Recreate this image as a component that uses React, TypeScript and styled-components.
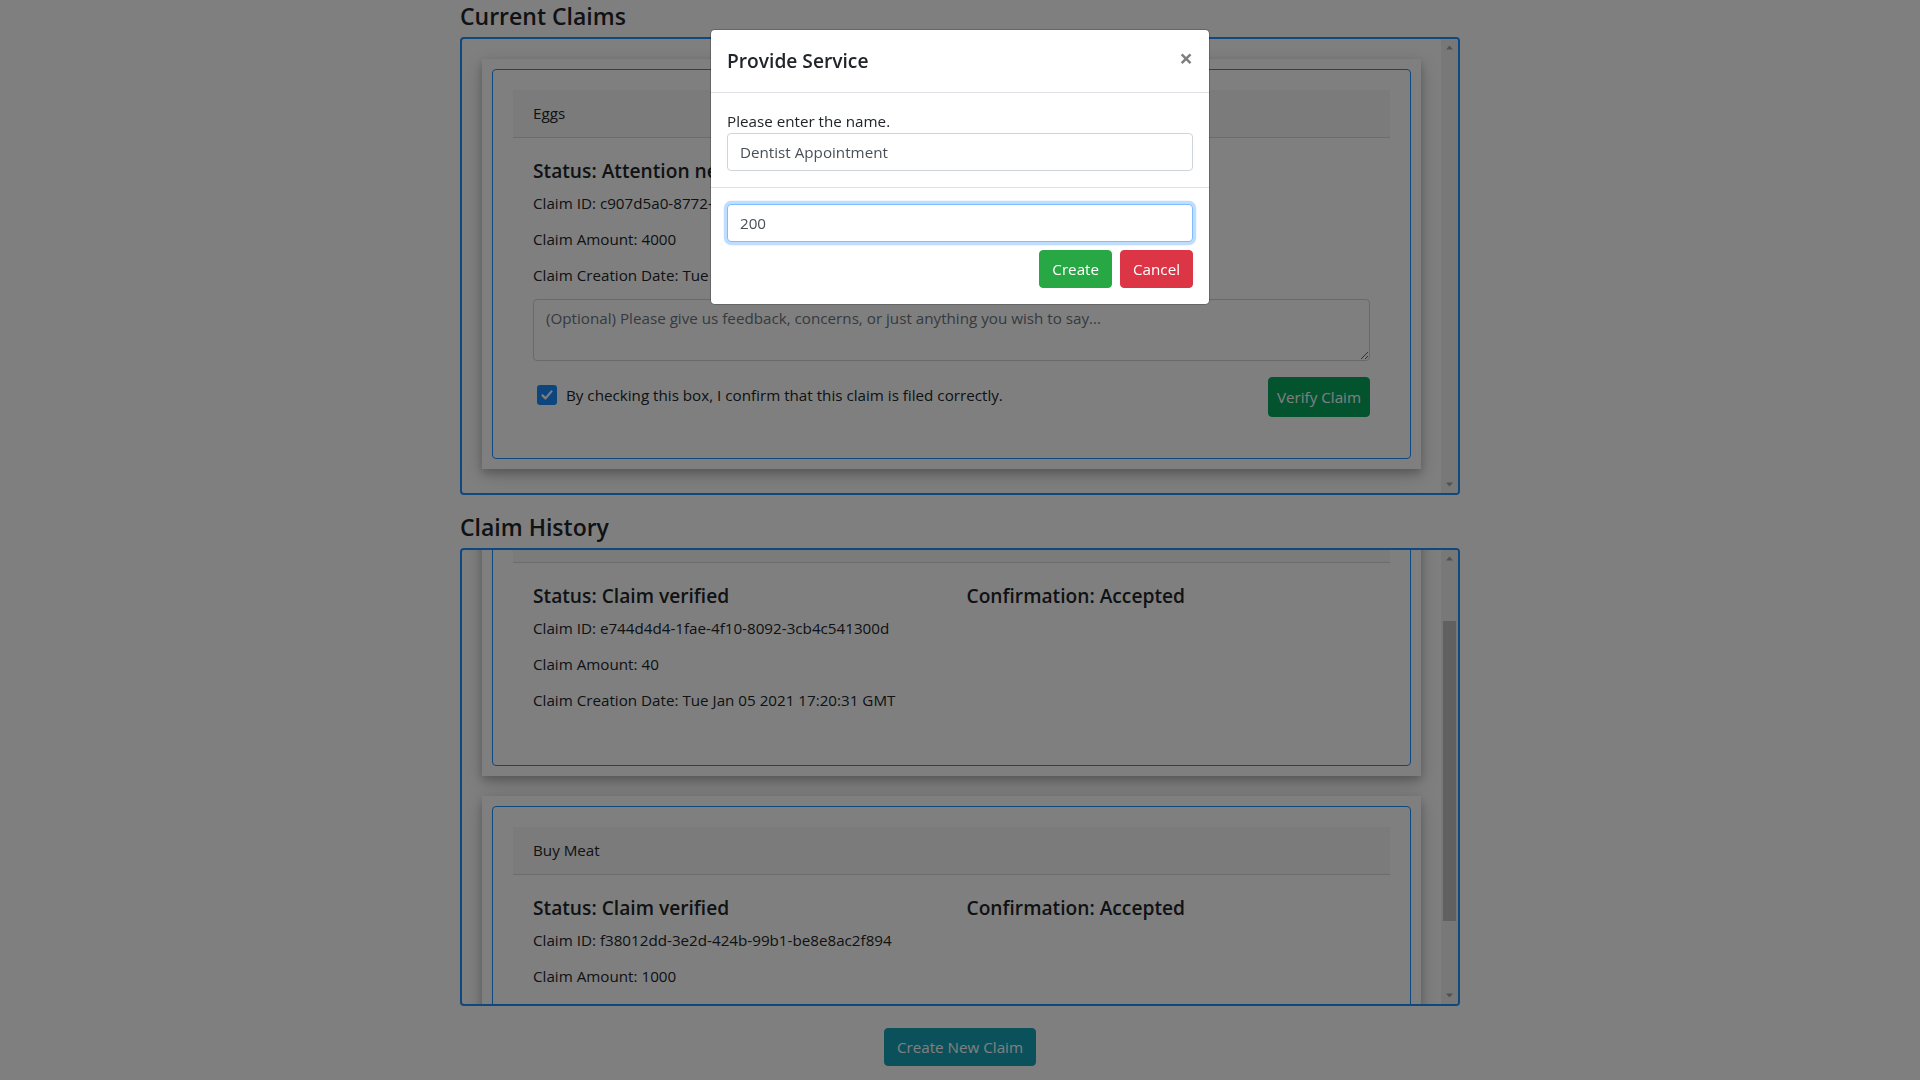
import React, { useLayoutEffect, useRef } from 'react';
import styled, { createGlobalStyle, css } from 'styled-components';

const GlobalStyle = createGlobalStyle`
  *, *::before, *::after {
    box-sizing: border-box;
  }
  html, body {
    margin: 0;
    padding: 0;
    background: #fff;
    overflow: hidden;
  }
  body {
    font-family: "Open Sans", "Noto Sans", sans-serif;
    font-size: 15.2px;
    line-height: 24px;
    color: #212529;
  }
`;

type Claim = {
  title: string;
  status: string;
  confirmation: string;
  id: string;
  amount: number;
  date: string;
};

const currentClaims: Claim[] = [
  {
    title: 'Eggs',
    status: 'Attention needed',
    confirmation: 'Pending',
    id: 'c907d5a0-8772-4c1e-9b3a-5f2d7e81a604',
    amount: 4000,
    date: 'Tue Jan 05 2021 17:24:12 GMT',
  },
];

const claimHistory: Claim[] = [
  {
    title: 'Buy Milk',
    status: 'Claim verified',
    confirmation: 'Accepted',
    id: 'e744d4d4-1fae-4f10-8092-3cb4c541300d',
    amount: 40,
    date: 'Tue Jan 05 2021 17:20:31 GMT',
  },
  {
    title: 'Buy Meat',
    status: 'Claim verified',
    confirmation: 'Accepted',
    id: 'f38012dd-3e2d-424b-99b1-be8e8ac2f894',
    amount: 1000,
    date: 'Tue Jan 05 2021 17:22:08 GMT',
  },
];

const ScrollBox = ({
  children,
  scrollTop = 0,
  thumb,
}: {
  children: React.ReactNode;
  scrollTop?: number;
  thumb?: { top: number; size: number };
}) => {
  const ref = useRef<HTMLDivElement>(null);

  useLayoutEffect(() => {
    if (ref.current) ref.current.scrollTop = scrollTop;
  }, [scrollTop]);

  return (
    <ListFrame>
      <ListViewport ref={ref}>{children}</ListViewport>
      <Rail>
        <RailButton>
          <svg width="17" height="17" viewBox="0 0 17 17">
            <polygon points="5,10.5 12,10.5 8.5,6.5" fill="#a3a3a3" />
          </svg>
        </RailButton>
        <RailTrack>
          {thumb && <RailThumb style={{ marginTop: thumb.top, height: thumb.size }} />}
        </RailTrack>
        <RailButton>
          <svg width="17" height="17" viewBox="0 0 17 17">
            <polygon points="5,6.5 12,6.5 8.5,10.5" fill="#a3a3a3" />
          </svg>
        </RailButton>
      </Rail>
    </ListFrame>
  );
};

const ClaimDetails = ({ claim }: { claim: Claim }) => (
  <InfoRow>
    <div>
      <StatusTitle>Status: {claim.status}</StatusTitle>
      <Detail>Claim ID: {claim.id}</Detail>
      <Detail>Claim Amount: {claim.amount}</Detail>
      <Detail>Claim Creation Date: {claim.date}</Detail>
    </div>
    <div>
      <StatusTitle>Confirmation: {claim.confirmation}</StatusTitle>
    </div>
  </InfoRow>
);

const ClaimCard = ({ claim, editable }: { claim: Claim; editable?: boolean }) => (
  <Card>
    <CardFrame>
      <CardHeader>{claim.title}</CardHeader>
      <CardBody>
        <ClaimDetails claim={claim} />
        {editable && (
          <>
            <Feedback
              rows={2}
              placeholder="(Optional) Please give us feedback, concerns, or just anything you wish to say..."
            />
            <VerifyRow>
              <CheckLabel>
                <CheckBox>
                  <svg width="14" height="14" viewBox="0 0 14 14" fill="none">
                    <path
                      d="M2.5 7.4l3 3 6-7"
                      stroke="#fff"
                      strokeWidth="2.2"
                      strokeLinecap="round"
                      strokeLinejoin="round"
                    />
                  </svg>
                </CheckBox>
                By checking this box, I confirm that this claim is filed correctly.
              </CheckLabel>
              <Button $variant="verify">Verify Claim</Button>
            </VerifyRow>
          </>
        )}
      </CardBody>
    </CardFrame>
  </Card>
);

export default function App() {
  return (
    <>
      <GlobalStyle />
      <Page>
        <SectionTitle>Current Claims</SectionTitle>
        <ScrollBox>
          {currentClaims.map((c) => (
            <ClaimCard key={c.id} claim={c} editable />
          ))}
        </ScrollBox>

        <SectionTitle>Claim History</SectionTitle>
        <ScrollBox scrollTop={86} thumb={{ top: 54, size: 300 }}>
          {claimHistory.map((c) => (
            <ClaimCard key={c.id} claim={c} />
          ))}
        </ScrollBox>

        <FooterBar>
          <Button $variant="info">Create New Claim</Button>
        </FooterBar>
      </Page>

      <Backdrop />
      <ModalLayer>
        <Dialog>
          <ModalHeader>
            <ModalTitle>Provide Service</ModalTitle>
            <CloseButton aria-label="Close">×</CloseButton>
          </ModalHeader>
          <ModalBody>
            <FieldLabel>Please enter the name.</FieldLabel>
            <Input defaultValue="Dentist Appointment" />
          </ModalBody>
          <ModalFooter>
            <Input defaultValue="200" $focused />
            <Button $variant="success">Create</Button>
            <Button $variant="danger">Cancel</Button>
          </ModalFooter>
        </Dialog>
      </ModalLayer>
    </>
  );
}

const Page = styled.div`
  width: 1000px;
  margin: 0 auto;
  padding-top: 2px;
`;

const SectionTitle = styled.h4`
  margin: 0 0 7px;
  font-size: 23px;
  line-height: 28px;
  font-weight: 600;
`;

const ListFrame = styled.div`
  display: flex;
  height: 458px;
  margin-bottom: 18px;
  border: 2px solid #1e90ff;
  border-radius: 4px;
  overflow: hidden;
`;

const ListViewport = styled.div`
  flex: 1;
  display: flex;
  flex-direction: column;
  gap: 20px;
  padding: 20px;
  overflow: hidden;
`;

const Rail = styled.div`
  display: flex;
  flex-direction: column;
  width: 17px;
  flex-shrink: 0;
  background: #f1f1f1;
`;

const RailButton = styled.div`
  height: 17px;
  flex-shrink: 0;

  svg {
    display: block;
  }
`;

const RailTrack = styled.div`
  flex: 1;
`;

const RailThumb = styled.div`
  margin: 0 2px;
  background: #c1c1c1;
`;

const Card = styled.div`
  flex-shrink: 0;
  padding: 10px;
  background: #fff;
  box-shadow: 0 4px 8px 0 rgba(0, 0, 0, 0.2), 0 6px 20px 0 rgba(0, 0, 0, 0.19);
`;

const CardFrame = styled.div`
  padding: 20px;
  border: 1px solid #1e90ff;
  border-radius: 4px;
`;

const CardHeader = styled.div`
  padding: 12px 20px;
  background: rgba(0, 0, 0, 0.03);
  border-bottom: 1px solid rgba(0, 0, 0, 0.125);
  line-height: 23px;
`;

const CardBody = styled.div`
  padding: 21px 20px;
`;

const InfoRow = styled.div`
  display: grid;
  grid-template-columns: 1fr 1fr;
  column-gap: 30px;
`;

const StatusTitle = styled.h5`
  margin: 0 0 8px;
  font-size: 19.2px;
  line-height: 24px;
  font-weight: 600;
`;

const Detail = styled.p`
  margin: 0 0 12px;
`;

const Feedback = styled.textarea`
  display: block;
  width: 100%;
  height: 62px;
  margin: 0 0 16px;
  padding: 6px 12px;
  font: inherit;
  color: #495057;
  border: 1px solid #ced4da;
  border-radius: 4px;
  &::placeholder {
    color: #6c757d;
  }
`;

const VerifyRow = styled.div`
  display: flex;
  align-items: center;
  justify-content: space-between;
  height: 40px;
`;

const CheckLabel = styled.label`
  display: flex;
  align-items: center;
  gap: 9px;
  margin-left: 4px;
  margin-top: -5px;
`;

const CheckBox = styled.span`
  display: inline-flex;
  align-items: center;
  justify-content: center;
  width: 20px;
  height: 20px;
  border-radius: 3px;
  background: #1a8cff;
`;

const variants = {
  success: css`
    background: #28a745;
    border-color: #28a745;
    padding: 6px 12px;
  `,
  danger: css`
    background: #dc3545;
    border-color: #dc3545;
    padding: 6px 12px;
  `,
  info: css`
    background: #17a2b8;
    border-color: #17a2b8;
    padding: 6px 12px;
  `,
  verify: css`
    background: #07a65e;
    border-color: #07a65e;
    padding: 7px 8px;
  `,
};

const Button = styled.button<{ $variant: keyof typeof variants }>`
  font: inherit;
  line-height: 24px;
  color: #fff;
  border: 1px solid transparent;
  border-radius: 4px;
  cursor: pointer;
  ${(p) => variants[p.$variant]}
`;

const FooterBar = styled.div`
  display: flex;
  justify-content: center;
  padding-top: 4px;
`;

const Backdrop = styled.div`
  position: fixed;
  inset: 0;
  background: rgba(0, 0, 0, 0.5);
  z-index: 1040;
`;

const ModalLayer = styled.div`
  position: fixed;
  inset: 0;
  z-index: 1050;
`;

const Dialog = styled.div`
  width: 500px;
  margin: 29px auto;
  background: #fff;
  background-clip: padding-box;
  border: 1px solid rgba(0, 0, 0, 0.2);
  border-radius: 4.8px;
`;

const ModalHeader = styled.div`
  display: flex;
  align-items: flex-start;
  justify-content: space-between;
  padding: 16px;
  border-bottom: 1px solid #dee2e6;
`;

const ModalTitle = styled.h5`
  margin: 0;
  font-size: 19.2px;
  line-height: 30px;
  font-weight: 600;
`;

const CloseButton = styled.button`
  margin: -16px -16px -16px auto;
  padding: 16px;
  background: transparent;
  border: 0;
  font-family: inherit;
  font-size: 24px;
  font-weight: 700;
  line-height: 1;
  color: #000;
  opacity: 0.5;
  text-shadow: 0 1px 0 #fff;
`;

const ModalBody = styled.div`
  padding: 16px;
`;

const FieldLabel = styled.label`
  display: block;
`;

const Input = styled.input<{ $focused?: boolean }>`
  display: block;
  width: 100%;
  height: 38px;
  padding: 6px 12px;
  font: inherit;
  color: #495057;
  background: #fff;
  border: 1px solid #ced4da;
  border-radius: 4px;
  outline: none;
  ${(p) =>
    p.$focused &&
    css`
      border-color: #80bdff;
      box-shadow: 0 0 0 3.2px rgba(0, 123, 255, 0.25);
    `}
`;

const ModalFooter = styled.div`
  display: flex;
  flex-wrap: wrap;
  align-items: center;
  justify-content: flex-end;
  padding: 12px;
  border-top: 1px solid #dee2e6;

  & > * {
    margin: 4px;
  }
`;
